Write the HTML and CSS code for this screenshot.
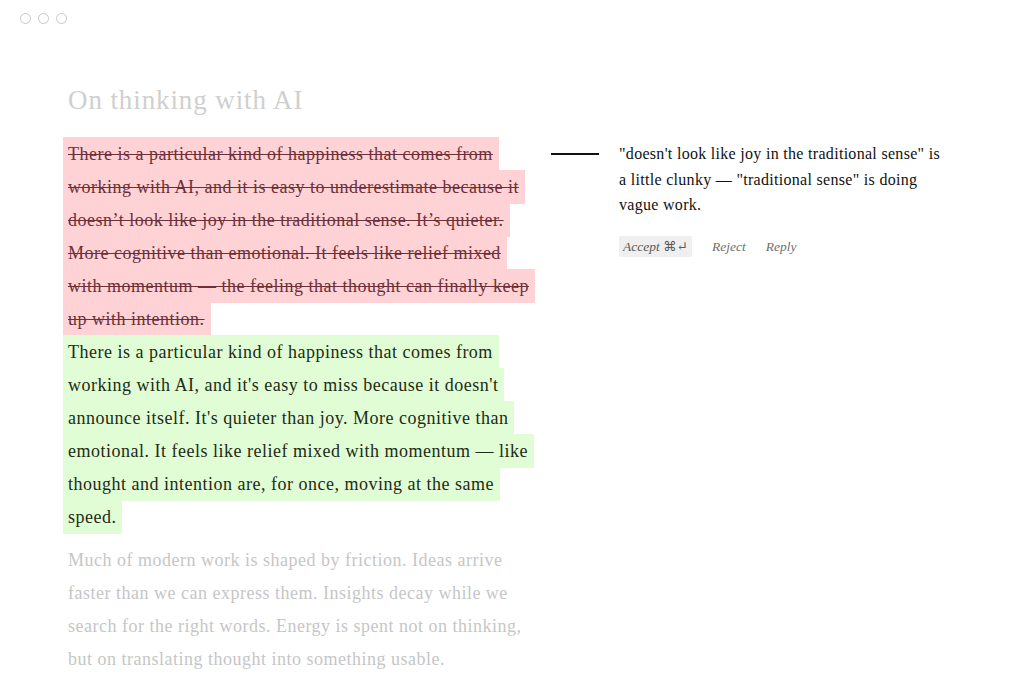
FILE: index.html
```html
<!DOCTYPE html>
<html>
<head>
<meta charset="utf-8">
<link rel="stylesheet" href="styles.css">
</head>
<body>
<div class="dots"><span class="dot"></span><span class="dot"></span><span class="dot"></span></div>
<div class="page">
  <article class="doc">
    <h1 class="title">On thinking with AI</h1>
    <div class="para"><span class="del">There is a particular kind of happiness that comes from<br>working with AI, and it is easy to underestimate because it<br>doesn’t look like joy in the traditional sense. It’s quieter.<br>More cognitive than emotional. It feels like relief mixed<br>with momentum — the feeling that thought can finally keep<br>up with intention.</span></div>
    <div class="para"><span class="ins">There is a particular kind of happiness that comes from<br>working with AI, and it's easy to miss because it doesn't<br>announce itself. It's quieter than joy. More cognitive than<br>emotional. It feels like relief mixed with momentum — like<br>thought and intention are, for once, moving at the same<br>speed.</span></div>
    <p class="para muted">Much of modern work is shaped by friction. Ideas arrive<br>faster than we can express them. Insights decay while we<br>search for the right words. Energy is spent not on thinking,<br>but on translating thought into something usable.</p>
  </article>
  <aside class="comment">
    <div class="connector"></div>
    <div class="comment-body">
      <p class="comment-text">"doesn't look like joy in the traditional sense" is<br>a little clunky — "traditional sense" is doing<br>vague work.</p>
      <div class="actions">
        <span class="btn primary">Accept ⌘↵</span>
        <span class="btn">Reject</span>
        <span class="btn">Reply</span>
      </div>
    </div>
  </aside>
</div>
</body>
</html>
```

FILE: styles.css
```css
html, body {
  margin: 0;
  padding: 0;
  background: #ffffff;
}
body {
  font-family: "Liberation Serif", "DejaVu Serif", serif;
  width: 1024px;
  height: 682px;
  overflow: hidden;
}
.dots {
  display: flex;
  gap: 7px;
  padding: 13px 0 0 20px;
}
.dot {
  box-sizing: border-box;
  width: 11px;
  height: 11px;
  border: 1.3px solid #c9c9c9;
  border-radius: 50%;
}
.page {
  display: flex;
  padding-left: 63px;
}
.doc {
  width: 480px;
  flex: none;
}
.title {
  margin: 60px 0 22px 5px;
  font-size: 27px;
  letter-spacing: 0.9px;
  font-weight: normal;
  line-height: 32px;
  color: #cfcfcf;
}
.para {
  margin: 0;
  font-size: 18px;
  letter-spacing: 0.5px;
  line-height: 33px;
  white-space: nowrap;
}
.del, .ins {
  padding: 6.6px 6px 6.6px 5px;
  -webkit-box-decoration-break: clone;
  box-decoration-break: clone;
}
.del {
  background: #ffd3d5;
  color: #6e3038;
  text-decoration: line-through;
  text-decoration-thickness: 1.3px;
}
.ins {
  background: #e1fdd5;
  color: #1e2b16;
}
.muted {
  margin-top: 10px;
  padding-left: 5px;
  color: #c6c6c6;
}
.comment {
  display: flex;
  padding-top: 130px;
  margin-left: 8px;
}
.connector {
  width: 48px;
  height: 2px;
  background: #111;
  margin-top: -1px;
  flex: none;
}
.comment-body {
  margin-left: 20px;
  margin-top: -13px;
}
.comment-text {
  margin: 0;
  font-size: 16px;
  letter-spacing: 0.3px;
  line-height: 25.5px;
  color: #111;
}
.actions {
  display: flex;
  align-items: center;
  gap: 20px;
  margin-top: 18px;
}
.btn {
  font-style: italic;
  font-size: 13.5px;
  color: #6f6f6f;
  line-height: 21px;
}
.btn.primary {
  background: #efefef;
  padding: 0 4px;
  border-radius: 2px;
  color: #5a5a5a;
}
```
